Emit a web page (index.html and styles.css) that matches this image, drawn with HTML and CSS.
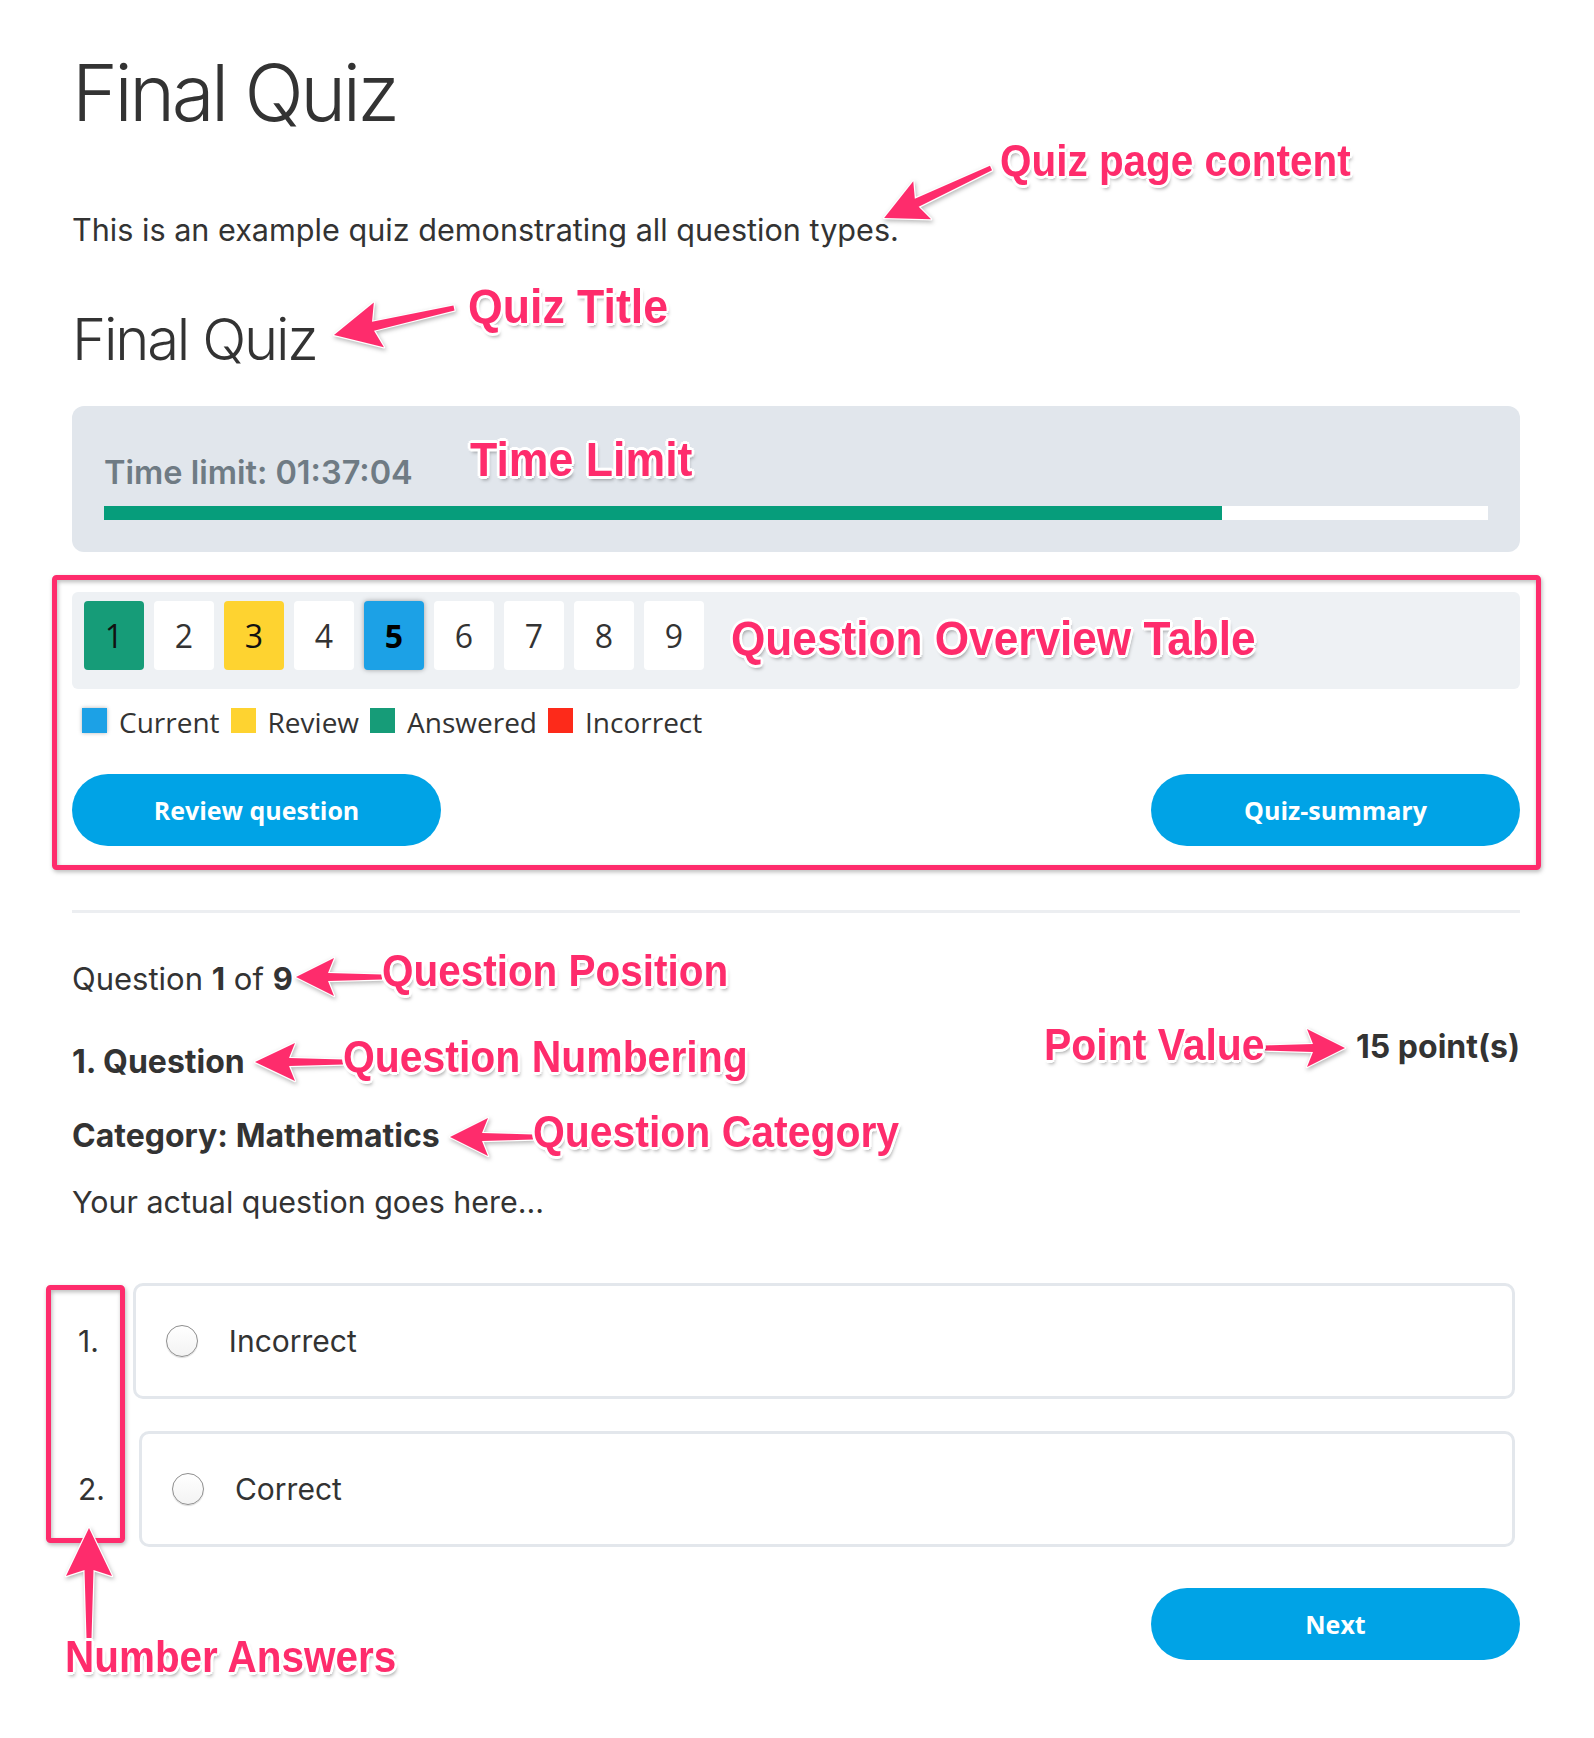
FILE: index.html
```html
<!DOCTYPE html>
<html lang="en">
<head>
<meta charset="utf-8">
<title>Final Quiz</title>
<link rel="stylesheet" href="styles.css">
</head>
<body>
<div class="page">
  <h1 class="quiz-heading">Final Quiz</h1>
  <p class="desc">This is an example quiz demonstrating all question types.</p>
  <h2 class="quiz-title">Final Quiz</h2>

  <div class="timer">
    <div class="timer-label">Time limit: 01:37:04</div>
    <div class="timer-bar"><div class="timer-fill" style="width:80.8%"></div></div>
  </div>

  <div class="overview">
    <ol class="q-list">
      <li class="q-item answered">1</li>
      <li class="q-item">2</li>
      <li class="q-item review">3</li>
      <li class="q-item">4</li>
      <li class="q-item current">5</li>
      <li class="q-item">6</li>
      <li class="q-item">7</li>
      <li class="q-item">8</li>
      <li class="q-item">9</li>
    </ol>
  </div>

  <div class="legend"><span class="swatch sw-current"></span><span class="legend-text">Current</span><span class="swatch sw-review"></span><span class="legend-text">Review</span><span class="swatch sw-answered"></span><span class="legend-text">Answered</span><span class="swatch sw-incorrect"></span><span class="legend-text">Incorrect</span></div>

  <div class="actions">
    <button class="btn">Review question</button>
    <button class="btn">Quiz-summary</button>
  </div>

  <div class="divider"></div>

  <div class="position">Question <b>1</b> of <b>9</b></div>

  <div class="q-head">
    <div class="q-title">1. Question</div>
    <div class="points">15 point(s)</div>
  </div>

  <div class="category">Category: Mathematics</div>
  <p class="q-text">Your actual question goes here...</p>

  <ol class="answers">
    <li class="answer">
      <span class="ans-num">1.</span>
      <label class="ans-box"><span class="radio"></span><span class="ans-text">Incorrect</span></label>
    </li>
    <li class="answer">
      <span class="ans-num">2.</span>
      <label class="ans-box"><span class="radio"></span><span class="ans-text">Correct</span></label>
    </li>
  </ol>

  <div class="nav">
    <button class="btn">Next</button>
  </div>
</div>

<svg class="overlay" width="1594" height="1738" viewBox="0 0 1594 1738" aria-hidden="true">
  <g class="marks">
    <rect x="54.5" y="577.5" width="1484" height="290" rx="2"/>
    <rect x="48.5" y="1287.5" width="74" height="253" rx="2"/>
  </g>
  <g class="arrows">
    <path transform="translate(991 168) rotate(154.9)" d="M0,-2.5 L82,-4.5 L76,-21 L118,0 L76,21 L82,4.5 L0,2.5 Z"/>
    <path transform="translate(454 308) rotate(167.3)" d="M0,-2.5 L83,-4.5 L77,-23 L123,0 L77,23 L83,4.5 L0,2.5 Z"/>
    <path transform="translate(382 977) rotate(180)" d="M0,-2.5 L54,-4 L48,-19 L86,0 L48,19 L54,4 L0,2.5 Z"/>
    <path transform="translate(343 1062) rotate(180)" d="M0,-2.5 L54,-4 L48,-19 L88,0 L48,19 L54,4 L0,2.5 Z"/>
    <path transform="translate(533 1137) rotate(180)" d="M0,-2.5 L51,-4 L45,-19 L83,0 L45,19 L51,4 L0,2.5 Z"/>
    <path transform="translate(1264 1048)" d="M0,-2.5 L49,-4 L43,-19 L81,0 L43,19 L49,4 L0,2.5 Z"/>
    <path transform="translate(89 1638) rotate(-90)" d="M0,-2.5 L68,-4.5 L62,-23 L110,0 L62,23 L68,4.5 L0,2.5 Z"/>
  </g>
</svg>

<span class="note note-content">Quiz page content</span>
<span class="note note-title">Quiz Title</span>
<span class="note note-time">Time Limit</span>
<span class="note note-overview">Question Overview Table</span>
<span class="note note-position">Question Position</span>
<span class="note note-numbering">Question Numbering</span>
<span class="note note-category">Question Category</span>
<span class="note note-points">Point Value</span>
<span class="note note-answers">Number Answers</span>
</body>
</html>
```

FILE: styles.css
```css
* { box-sizing: border-box; }

html, body {
  margin: 0;
  padding: 0;
  background: #ffffff;
}

body {
  position: relative;
  width: 1594px;
  min-height: 1738px;
  font-family: Inter, "Noto Sans", "DejaVu Sans", sans-serif;
  color: #333333;
}

.page {
  width: 1448px;
  margin-left: 72px;
  padding-top: 48px;
  padding-bottom: 60px;
}

.quiz-heading {
  margin: 0;
  font-size: 78px;
  line-height: 90px;
  font-weight: 300;
  letter-spacing: -0.044em;
  color: #333333;
}

.desc {
  margin: 72px 0 0;
  font-size: 30.6px;
  line-height: 40px;
  font-weight: 400;
}

.quiz-title {
  margin: 54px 0 0;
  font-size: 58px;
  line-height: 70px;
  font-weight: 300;
  letter-spacing: -0.038em;
  color: #333333;
}

/* timer */
.timer {
  margin-top: 32px;
  background: #e1e6ec;
  border-radius: 12px;
  padding: 47px 32px 32px 32px;
}

.timer-label {
  font-size: 32.5px;
  line-height: 40px;
  font-weight: 600;
  color: #6f7b84;
}

.timer-bar {
  margin-top: 13px;
  height: 14px;
  background: #ffffff;
}

.timer-fill {
  height: 100%;
  background: #069d7b;
}

/* overview */
.overview {
  margin-top: 40px;
  background: #eef1f4;
  border-radius: 6px;
  padding: 9px 12px 19px 12px;
}

.q-list {
  list-style: none;
  margin: 0;
  padding: 0;
  display: flex;
  gap: 10px;
}

.q-item {
  width: 60px;
  height: 69px;
  border-radius: 4px;
  background: #ffffff;
  display: flex;
  align-items: center;
  justify-content: center;
  font-family: "Open Sans", "Noto Sans", sans-serif;
  font-size: 32px;
  color: #333333;
}

.q-item.answered { background: #169c78; color: #111111; }
.q-item.review { background: #fed330; color: #111111; }
.q-item.current {
  background: #1ca1e6;
  color: #000000;
  font-weight: 700;
  box-shadow: 0 0 5px rgba(0, 0, 0, 0.35);
}

/* legend */
.legend {
  margin-top: 13px;
  padding-left: 10px;
  font-family: "Open Sans", "Noto Sans", sans-serif;
  font-size: 28px;
  line-height: 40px;
  color: #333333;
}

.swatch {
  display: inline-block;
  width: 25px;
  height: 25px;
  vertical-align: baseline;
  margin-right: 12px;
}

.legend-text { margin-right: 11px; }

.sw-current { background: #1ca1e6; box-shadow: 0 0 4px rgba(0, 0, 0, 0.3); }
.sw-review { background: #fed330; }
.sw-answered { background: #169c78; }
.sw-incorrect { background: #fd2a1a; }

/* buttons */
.actions {
  margin-top: 32px;
  display: flex;
  justify-content: space-between;
}

.btn {
  width: 369px;
  height: 72px;
  border: none;
  border-radius: 36px;
  background: #00a3e6;
  color: #ffffff;
  font-family: "Open Sans", "Noto Sans", sans-serif;
  font-size: 25px;
  font-weight: 700;
  padding: 0;
  cursor: pointer;
}

.divider {
  margin-top: 64px;
  height: 3px;
  background: #eceef1;
}

.position {
  margin-top: 46px;
  font-size: 31px;
  line-height: 40px;
}

.position b { font-weight: 700; }

.q-head {
  margin-top: 28px;
  display: flex;
  justify-content: space-between;
  align-items: flex-start;
}

.q-title {
  margin-top: 15px;
  font-size: 32px;
  line-height: 40px;
  font-weight: 700;
}

.points {
  font-size: 32px;
  line-height: 40px;
  font-weight: 700;
}

.category {
  margin-top: 34px;
  font-size: 32px;
  line-height: 40px;
  font-weight: 700;
}

.q-text {
  margin: 26px 0 0;
  font-size: 30.4px;
  line-height: 40px;
}

/* answers */
.answers {
  list-style: none;
  margin: 61px 5px 0 0;
  padding: 0;
  display: flex;
  flex-direction: column;
  gap: 32px;
}

.answer {
  display: flex;
  align-items: center;
}

.ans-num {
  padding-left: 6px;
  margin-right: 34px;
  font-size: 30px;
  line-height: 40px;
}

.ans-box {
  flex: 1;
  height: 116px;
  border: 3px solid #e3e7ec;
  border-radius: 10px;
  display: flex;
  align-items: center;
  padding-left: 30px;
  font-size: 30px;
  line-height: 40px;
}

.radio {
  width: 32px;
  height: 32px;
  border-radius: 50%;
  border: 1px solid #8f8f8f;
  background: linear-gradient(#ffffff, #f3f3f3);
  box-shadow: 0 1px 1px rgba(0, 0, 0, 0.15);
  margin-right: 31px;
  flex: none;
}

.nav {
  margin-top: 41px;
  display: flex;
  justify-content: flex-end;
}

/* annotation overlay */
.overlay {
  position: absolute;
  left: 0;
  top: 0;
  pointer-events: none;
  filter: drop-shadow(1px 2px 2px rgba(0, 0, 0, 0.28));
}

.marks rect {
  fill: none;
  stroke: #fe2c6c;
  stroke-width: 5;
}

.arrows path {
  fill: #fe2c6c;
  stroke: #ffffff;
  stroke-width: 2.5;
  stroke-linejoin: round;
  paint-order: stroke;
}

.note {
  position: absolute;
  font-family: "Liberation Sans", Arial, sans-serif;
  font-weight: 700;
  line-height: 1;
  color: #fe2c6c;
  white-space: nowrap;
  transform: scaleX(0.93);
  transform-origin: left center;
  text-shadow:
    2px 0 0 #fff, -2px 0 0 #fff, 0 2px 0 #fff, 0 -2px 0 #fff,
    2px 2px 0 #fff, -2px -2px 0 #fff, 2px -2px 0 #fff, -2px 2px 0 #fff,
    3px 0 0 #fff, -3px 0 0 #fff, 0 3px 0 #fff, 0 -3px 0 #fff,
    2px 4px 4px rgba(0, 0, 0, 0.35);
}

.note-content { left: 1000px; top: 140px; font-size: 43.5px; }
.note-title { left: 468px; top: 283px; font-size: 48px; }
.note-time { left: 470px; top: 436px; font-size: 48px; }
.note-overview { left: 731px; top: 615px; font-size: 47.5px; }
.note-position { left: 382px; top: 950px; font-size: 43.5px; }
.note-numbering { left: 343px; top: 1035px; font-size: 44px; }
.note-category { left: 533px; top: 1110px; font-size: 44px; }
.note-points { left: 1044px; top: 1023px; font-size: 44px; }
.note-answers { left: 65px; top: 1636px; font-size: 43.5px; }
```
